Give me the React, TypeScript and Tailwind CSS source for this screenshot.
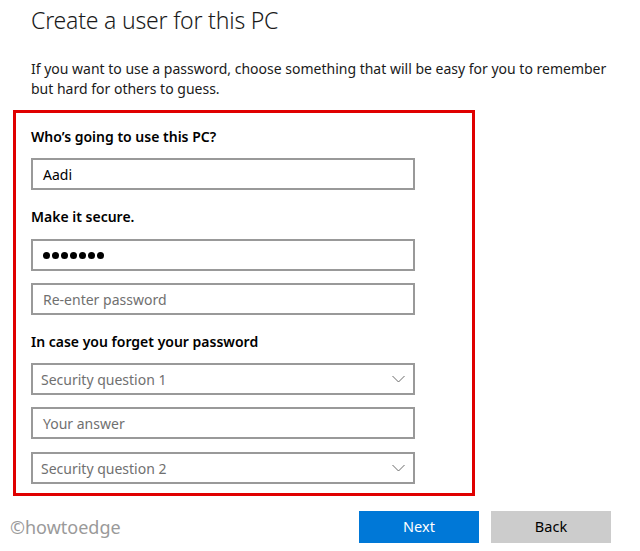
import React from "react";

const font = { fontFamily: '"Noto Sans", "Open Sans", sans-serif' };

function Chevron() {
  return (
    <svg width="13" height="8" viewBox="0 0 13 8" className="shrink-0">
      <path d="M0.5 1 L6.5 7 L12.5 1" fill="none" stroke="#6a6a6a" strokeWidth="1" />
    </svg>
  );
}

function Field({ children, className = "" }: { children: React.ReactNode; className?: string }) {
  return (
    <div className={`h-[32px] w-[384px] border-2 border-[#999999] bg-white flex items-center ${className}`}>
      {children}
    </div>
  );
}

export default function App() {
  return (
    <div className="relative w-[640px] h-[551px] bg-white text-black overflow-hidden" style={font}>
      <div className="pl-[31px] pt-[4px]">
        <h1 className="text-[23px] leading-[32px] font-light tracking-[-0.2px] text-[#1a1a1a]">Create a user for this PC</h1>
        <p className="mt-[23px] text-[14px] leading-[20px] text-[#1a1a1a]">
          If you want to use a password, choose something that will be easy for you to remember
          <br />
          but hard for others to guess.
        </p>
      </div>
      <div className="ml-[13px] mt-[11px] w-[462px] h-[386px] border-[3px] border-[#e00000] pl-[15px] pt-[14px]">
        <div className="text-[14px] leading-[20px] font-semibold">Who’s going to use this PC?</div>
        <Field className="mt-[11px] pl-[10px]">
          <span className="text-[14px] text-black">Aadi</span>
        </Field>
        <div className="mt-[17px] text-[14px] leading-[20px] font-semibold">Make it secure.</div>
        <Field className="mt-[12px] pl-[10px]">
          <span className="flex gap-[2px]">
            {Array.from({ length: 7 }).map((_, i) => (
              <span key={i} className="w-[7px] h-[7px] rounded-full bg-black" />
            ))}
          </span>
        </Field>
        <Field className="mt-[12px] pl-[10px]">
          <span className="text-[14px] text-[#707070]">Re-enter password</span>
        </Field>
        <div className="mt-[17px] text-[14px] leading-[20px] font-semibold">In case you forget your password</div>
        <Field className="mt-[11px] pl-[8px] pr-[8px] justify-between">
          <span className="text-[14px] text-[#707070]">Security question 1</span>
          <Chevron />
        </Field>
        <Field className="mt-[12px] pl-[10px]">
          <span className="text-[14px] text-[#707070]">Your answer</span>
        </Field>
        <Field className="mt-[13px] pl-[8px] pr-[8px] justify-between">
          <span className="text-[14px] text-[#707070]">Security question 2</span>
          <Chevron />
        </Field>
      </div>
      <div className="flex items-center mt-[15px]">
        <div className="ml-[10px] text-[18px] text-[#9a9a9a]">©howtoedge</div>
        <div className="ml-auto mr-[29px] flex gap-[12px]">
          <button className="w-[120px] h-[32px] bg-[#0078d7] text-white text-[14.5px]">Next</button>
          <button className="w-[120px] h-[32px] bg-[#cccccc] text-black text-[14.5px]">Back</button>
        </div>
      </div>
    </div>
  );
}
